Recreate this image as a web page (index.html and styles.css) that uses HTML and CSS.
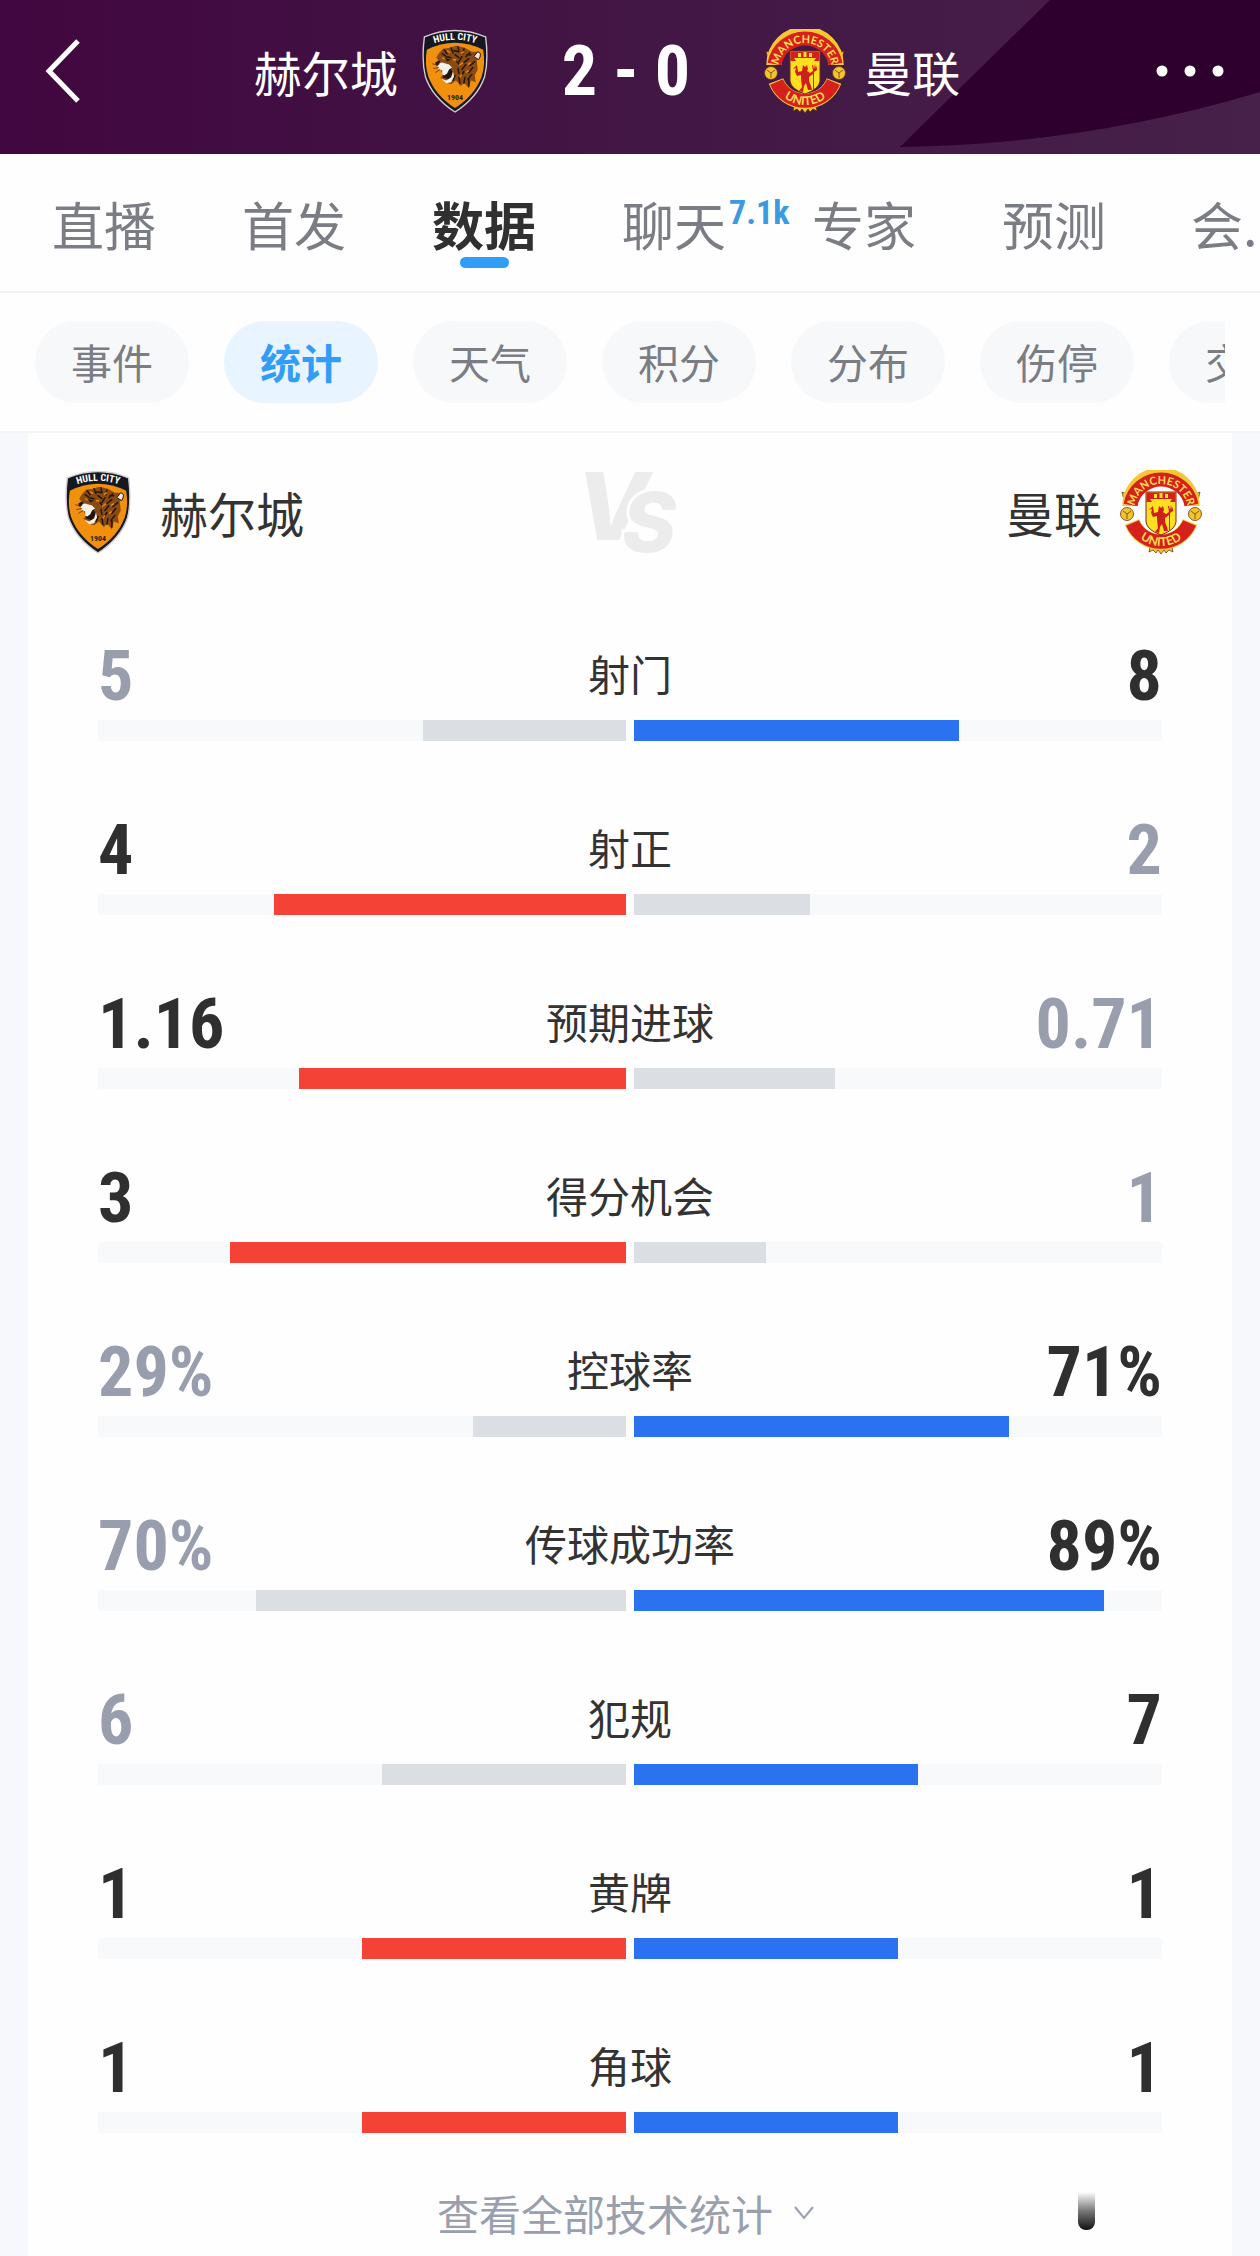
FILE: index.html
```html
<!DOCTYPE html>
<html lang="zh-CN">
<head>
  <meta charset="UTF-8">
  <meta name="viewport" content="width=device-width, initial-scale=1.0">
  <title>赫尔城 2 - 0 曼联</title>
  <link rel="stylesheet" href="styles.css">
</head>
<body>
  <!-- Club badges, used in the header and in the card -->
  <svg class="sprite" aria-hidden="true">
    <symbol id="badge-hull" viewBox="0 0 66 85">
      <path d="M2 8 Q33 -5 64 8 Q67 32 63 48 Q56 69 33 84 Q10 69 3 48 Q-1 32 2 8Z" fill="#14191f" stroke="#d5cbd2" stroke-width="1.4"/>
      <path d="M4.500 21 Q33 7 61.500 21 Q64 36 60 48 Q53 67 33 80 Q13 67 6 48 Q2 36 4.500 21Z" fill="#f0900c"/>
      <path id="hull-arc" d="M5 17 Q33 5 61 17" fill="none"/>
      <text class="hull-name"><textPath href="#hull-arc" startOffset="50%">HULL CITY</textPath></text>
      <path d="M17 24 L21 20 L28 19 L34 17 L43 19 L50 23 L56 23 L59 28 L55 32 L56 41 L53 47 L54 54 L49 52 L47 60 L42 54 L39 58 L34 52 L29 56 L23 54 L18 49 L21 47 L25 50 L29 46 L30 41 L24 37 L18 40 L13 35 L16 31 L14 29Z" fill="#8a4b12"/>
      <path d="M22 21 l3 4 M29 19 l2 5 M36 18 l1 5 M42 20 l-1 5 M48 24 l-4 4 M24 28 l5 1 M33 26 l4 3 M40 28 l-3 5 M47 30 l-5 4 M53 33 l-5 4 M35 33 l3 4 M44 36 l-4 5 M51 39 l-4 5 M36 40 l1 5 M42 43 l-3 5 M50 46 l-4 5 M37 49 l1 6 M43 49 l-1 6 M33 47 l-2 5 M47 51 l0 7 M20 25 l3 2 M32 22 l5 1 M45 26 l4 0" fill="none" stroke="#24150b" stroke-width="1.500" stroke-linecap="round"/>
      <path d="M25 22 l3 2 M39 25 l3 -2 M41 34 l-4 3 M49 34 l-3 2 M31 31 l3 0 M47 42 l-3 2 M40 46 l-2 3 M20 29 l6 3" stroke="#e98814" stroke-width="1.500" fill="none"/>
      <path d="M56 23 Q61 24 57 31 L52 28Z" fill="#efe9dc" stroke="#1d130c"/>
      <path d="M19 41 L29 39 L31 46 L27 51 L21 49Z" fill="#201512"/>
      <path d="M15 35 L20 34 L27 36 L30 39 L27 41 L25 45 L22 47 L20 46 L20 42 L16 40Z" fill="#f6f2ea"/>
      <path d="M19 50 L24 52 L29 49 L31 43 L32 48 L29 54 L24 55Z" fill="#f6f2ea"/>
      <path d="M13 34 L18 32 L17 36 L14 37Z M22 29 L29 31 L25 33Z" fill="#221811"/>
      <path d="M16 37 l-6 -2 M17 39 l-6 1 M18 41 l-5 3" stroke="#42210a" stroke-width="0.7"/>
      <text class="hull-year" x="33" y="72">1904</text>
    </symbol>

    <symbol id="badge-united" viewBox="0 0 82 84">
      <g fill="#f3c52c" stroke="#59220c" stroke-width="0.7">
        <path d="M30 7 L29 2 L33 4 L36 1 L38 4 L41 0 L44 4 L46 1 L49 4 L53 2 L52 7Z"/>
        <path d="M30 77 L29 82 L33 80 L36 83 L38 80 L41 84 L44 80 L46 83 L49 80 L53 82 L52 77Z"/>
        <path d="M4 30 L2 22 L7 24 L8 17 L13 20 L11 28Z M78 30 L80 22 L75 24 L74 17 L69 20 L71 28Z"/>
      </g>
      <g fill="none">
        <path d="M10 36 A31 31 0 0 1 72 36" stroke="#f5c832" stroke-width="15.500"/>
        <path d="M10.500 35 A31 31 0 0 1 71.500 35" stroke="#d5201c" stroke-width="14"/>
        <path d="M12 52 A31 31 0 0 0 70 52" stroke="#f5c832" stroke-width="15.500"/>
        <path d="M12.500 53 A31 31 0 0 0 69.500 53" stroke="#d5201c" stroke-width="14"/>
        <path id="united-top" d="M14 41 A27 27 0 0 1 68 41"/>
        <path id="united-bottom" d="M7 42 A34 34 0 0 0 75 42"/>
      </g>
      <text class="united-name"><textPath href="#united-top" startOffset="50%">MANCHESTER</textPath></text>
      <text class="united-name united-low"><textPath href="#united-bottom" startOffset="50%">UNITED</textPath></text>
      <g fill="#f3c52c" stroke="#6d3510" stroke-width="0.8">
        <circle cx="7" cy="44" r="6.500"/>
        <circle cx="75" cy="44" r="6.500"/>
        <path d="M3 41 L7 44 L7 49 M7 44 L11 41 M71 41 L75 44 L75 49 M75 44 L79 41" fill="none"/>
      </g>
      <path d="M26 22 H56 V52 Q55 60 41 65 Q27 60 26 52Z" fill="#ffdf1f" stroke="#7a2a12"/>
      <path d="M26.500 22.500 H55.500 V32 H26.500Z" fill="#d5201c"/>
      <path d="M30 29 H52 L50 32 H32Z M34 24 h3 v4 h-3z M39.500 23 h3 v5 h-3z M45 24 h3 v4 h-3z" fill="#ffdf1f"/>
      <path d="M39 36 L41 38 L43 36 L44 40 L43 42 L46 44 L49 42 L48 36 L49 36 L50 40 L51 35 L52 40 L53 36 L53 41 L50 43 L50 60 L49 60 L49 45 L45 48 L45 52 L47 57 L48 61 L44 61 L42 54 L40 57 L39 63 L35 62 L38 58 L37 50 L37 46 L33 47 L31 43 L32 39 L29 40 L33 36 L34 43 L38 42Z" fill="#cf1f1b"/>
    </symbol>
  </svg>

  <header class="header">
    <svg class="header-shape" viewBox="0 0 362 154" aria-hidden="true">
      <path d="M152 0 L362 0 L362 92 Q185 145 0 147 Q3 147 8 141Z" fill="#2d002d"/>
    </svg>
    <div class="header-side">
      <button class="icon-btn back-btn" aria-label="返回">
        <svg width="38" height="66" viewBox="0 0 38 66"><path d="M34 3 L5 33 L34 63" fill="none" stroke="#fff" stroke-width="5"/></svg>
      </button>
      <div class="header-team header-home">
        <span>赫尔城</span>
        <svg class="badge-hull"><use href="#badge-hull"/></svg>
      </div>
    </div>
    <h1 class="score">2 - 0</h1>
    <div class="header-side">
      <div class="header-team">
        <svg class="badge-united"><use href="#badge-united"/></svg>
        <span>曼联</span>
      </div>
      <button class="icon-btn more-btn" aria-label="更多">
        <svg width="68" height="12" viewBox="0 0 68 12" fill="#fff"><circle cx="6" cy="6" r="5.500"/><circle cx="34" cy="6" r="5.500"/><circle cx="62" cy="6" r="5.500"/></svg>
      </button>
    </div>
  </header>

  <nav class="tabs">
    <a class="tab" href="#">直播</a>
    <a class="tab" href="#">首发</a>
    <a class="tab active" href="#">数据</a>
    <a class="tab" href="#">聊天<span class="tab-count">7.1k</span></a>
    <a class="tab" href="#">专家</a>
    <a class="tab" href="#">预测</a>
    <a class="tab" href="#">会.</a>
  </nav>

  <div class="filters">
    <div class="filters-list">
      <button class="pill">事件</button>
      <button class="pill active">统计</button>
      <button class="pill">天气</button>
      <button class="pill">积分</button>
      <button class="pill">分布</button>
      <button class="pill">伤停</button>
      <button class="pill">交锋</button>
    </div>
  </div>

  <main class="card">
    <div class="teams">
      <div class="team">
        <svg class="badge-hull"><use href="#badge-hull"/></svg>
        <span>赫尔城</span>
      </div>
      <svg class="versus" viewBox="0 0 96 84">
        <text class="versus-v" x="-10" y="70">V</text>
        <text class="versus-s" x="36" y="82">S</text>
      </svg>
      <div class="team team-away">
        <span>曼联</span>
        <svg class="badge-united"><use href="#badge-united"/></svg>
      </div>
    </div>

    <div class="stats">
      <div class="stat">
        <div class="stat-head"><span class="value">5</span><span class="stat-name">射门</span><span class="value away lead">8</span></div>
        <div class="bars"><div class="track home"><div class="bar" style="width: 38.5%"></div></div><div class="track"><div class="bar blue" style="width: 61.5%"></div></div></div>
      </div>
      <div class="stat">
        <div class="stat-head"><span class="value lead">4</span><span class="stat-name">射正</span><span class="value away">2</span></div>
        <div class="bars"><div class="track home"><div class="bar red" style="width: 66.7%"></div></div><div class="track"><div class="bar" style="width: 33.3%"></div></div></div>
      </div>
      <div class="stat">
        <div class="stat-head"><span class="value lead">1.16</span><span class="stat-name">预期进球</span><span class="value away">0.71</span></div>
        <div class="bars"><div class="track home"><div class="bar red" style="width: 62%"></div></div><div class="track"><div class="bar" style="width: 38%"></div></div></div>
      </div>
      <div class="stat">
        <div class="stat-head"><span class="value lead">3</span><span class="stat-name">得分机会</span><span class="value away">1</span></div>
        <div class="bars"><div class="track home"><div class="bar red" style="width: 75%"></div></div><div class="track"><div class="bar" style="width: 25%"></div></div></div>
      </div>
      <div class="stat">
        <div class="stat-head"><span class="value">29%</span><span class="stat-name">控球率</span><span class="value away lead">71%</span></div>
        <div class="bars"><div class="track home"><div class="bar" style="width: 29%"></div></div><div class="track"><div class="bar blue" style="width: 71%"></div></div></div>
      </div>
      <div class="stat">
        <div class="stat-head"><span class="value">70%</span><span class="stat-name">传球成功率</span><span class="value away lead">89%</span></div>
        <div class="bars"><div class="track home"><div class="bar" style="width: 70%"></div></div><div class="track"><div class="bar blue" style="width: 89%"></div></div></div>
      </div>
      <div class="stat">
        <div class="stat-head"><span class="value">6</span><span class="stat-name">犯规</span><span class="value away lead">7</span></div>
        <div class="bars"><div class="track home"><div class="bar" style="width: 46.2%"></div></div><div class="track"><div class="bar blue" style="width: 53.8%"></div></div></div>
      </div>
      <div class="stat">
        <div class="stat-head"><span class="value lead">1</span><span class="stat-name">黄牌</span><span class="value away lead">1</span></div>
        <div class="bars"><div class="track home"><div class="bar red" style="width: 50%"></div></div><div class="track"><div class="bar blue" style="width: 50%"></div></div></div>
      </div>
      <div class="stat">
        <div class="stat-head"><span class="value lead">1</span><span class="stat-name">角球</span><span class="value away lead">1</span></div>
        <div class="bars"><div class="track home"><div class="bar red" style="width: 50%"></div></div><div class="track"><div class="bar blue" style="width: 50%"></div></div></div>
      </div>
    </div>

    <button class="show-all">
      查看全部技术统计
      <svg width="22" height="16" viewBox="0 0 22 16"><path d="M2 2 L11 13 L20 2" fill="none" stroke="#9a9fae" stroke-width="2"/></svg>
    </button>
    <span class="scroll-mark"></span>
  </main>
</body>
</html>
```

FILE: styles.css
```css
* {
  box-sizing: border-box;
}

body {
  margin: 0;
  background-color: #f7f8fb;
  color: #333;
  font-family: "Noto Sans CJK SC", sans-serif;
  overflow-x: hidden;
}

button {
  border: none;
  background: none;
  padding: 0;
  font-family: inherit;
  cursor: pointer;
}

svg {
  display: block;
  flex-shrink: 0;
}

.sprite {
  display: none;
}

/* Header */
.header {
  position: relative;
  display: grid;
  grid-template-columns: 1fr auto 1fr;
  align-items: center;
  column-gap: 74px;
  height: 154px;
  padding: 0 36px 12px 28px;
  background: linear-gradient(90deg, #410740, #421645 50%, #472149);
  color: #fff;
}

.header-shape {
  position: absolute;
  top: 0;
  right: 0;
  width: 362px;
  height: 154px;
}

.header-side {
  position: relative;
  display: flex;
  align-items: center;
}

.header-team {
  display: flex;
  align-items: center;
  gap: 18px;
  font-size: 48px;
  line-height: 60px;
}

.header-home {
  gap: 24px;
  margin-left: auto;
}

.back-btn {
  padding-left: 16px;
}

.more-btn {
  margin-left: auto;
}

.score {
  position: relative;
  margin: 0;
  font-family: "Roboto Condensed", "Roboto", sans-serif;
  font-size: 70px;
  line-height: 72px;
  font-weight: bold;
}

.badge-hull {
  width: 66px;
  height: 84px;
}

.badge-united {
  width: 82px;
  height: 84px;
}

.hull-name {
  font: bold 10px "Roboto Condensed", sans-serif;
  fill: #fff;
  text-anchor: middle;
}

.hull-year {
  font: bold 8px "Roboto Condensed", sans-serif;
  fill: #2b1a0c;
  text-anchor: middle;
}

.united-name {
  font: bold 11px "Lato", sans-serif;
  fill: #ffdc50;
  text-anchor: middle;
}

.united-low {
  font-size: 12px;
}

/* Tabs */
.tabs {
  display: flex;
  height: 139px;
  padding: 40px 0 0 9px;
  background-color: #fefefe;
  border-bottom: 2px solid #f1f2f4;
  overflow: hidden;
}

.tab {
  position: relative;
  flex: 0 0 190px;
  color: #7b7d84;
  font-size: 52px;
  line-height: 60px;
  text-align: center;
  text-decoration: none;
}

.tab:last-child {
  flex: 1;
  padding-left: 42px;
  text-align: left;
}

.tab.active {
  color: #303030;
  font-weight: bold;
}

.tab.active::after {
  content: "";
  display: block;
  width: 49px;
  height: 11px;
  margin: 3px auto 0;
  border-radius: 6px;
  background-color: #329df6;
}

.tab-count {
  position: absolute;
  top: 2px;
  left: 150px;
  color: #3b9ae0;
  font-family: "Roboto Condensed", "Roboto", sans-serif;
  font-size: 34px;
  line-height: 32px;
  font-weight: bold;
}

/* Filters */
.filters {
  padding: 28px 35px;
  background-color: #fefefe;
  border-bottom: 2px solid #f3f4f6;
}

.filters-list {
  display: flex;
  gap: 35px;
  overflow: hidden;
}

.pill {
  flex: 0 0 154px;
  height: 82px;
  padding-bottom: 2px;
  border-radius: 41px;
  background-color: #f7f8fa;
  color: #7b7d84;
  font-size: 41px;
}

.pill.active {
  background-color: #e8f4ff;
  color: #329df6;
  font-weight: bold;
}

/* Card */
.card {
  position: relative;
  margin: 0 28px;
  padding: 37px 0 13px;
  background-color: #fefefe;
}

.teams {
  display: grid;
  grid-template-columns: 1fr auto 1fr;
  align-items: center;
  padding: 0 30px 0 37px;
}

.team {
  display: flex;
  align-items: center;
  gap: 29px;
  font-size: 48px;
  line-height: 60px;
}

.team-away {
  justify-content: flex-end;
  gap: 18px;
}

.versus {
  width: 96px;
  height: 84px;
  overflow: visible;
}

.versus text {
  font-family: "Inter", sans-serif;
  font-style: italic;
  font-weight: 800;
  fill: #ececec;
}

.versus .versus-v {
  font-size: 94px;
}

.versus .versus-s {
  font-size: 82px;
  stroke: #fefefe;
  stroke-width: 6px;
  paint-order: stroke;
}

/* Stats */
.stats {
  display: flex;
  flex-direction: column;
  gap: 73px;
  padding: 86px 70px 0;
}

.stat-head {
  display: grid;
  grid-template-columns: 1fr auto 1fr;
  align-items: start;
  margin-bottom: 8px;
}

.value {
  color: #999eae;
  font-family: "Roboto Condensed", "Roboto", sans-serif;
  font-size: 70px;
  line-height: 72px;
  font-weight: bold;
}

.value.lead {
  color: #2f2f2f;
}

.value.away {
  text-align: right;
}

.stat-name {
  font-size: 42px;
  line-height: 66px;
}

.bars {
  display: flex;
  gap: 8px;
}

.track {
  display: flex;
  flex: 1;
  height: 21px;
  background-color: #f8f9fb;
}

.track.home {
  justify-content: flex-end;
}

.bar {
  background-color: #dbdee3;
}

.bar.red {
  background-color: #f44336;
}

.bar.blue {
  background-color: #2a72f0;
}

.show-all {
  display: flex;
  align-items: center;
  gap: 20px;
  margin: 50px auto 0;
  padding-right: 8px;
  color: #9a9fae;
  font-size: 42px;
  line-height: 60px;
}

.scroll-mark {
  position: absolute;
  right: 137px;
  bottom: 26px;
  width: 17px;
  height: 38px;
  border-radius: 0 0 8px 8px;
  background: linear-gradient(#fefefe, #777 50%, #111);
}
```
